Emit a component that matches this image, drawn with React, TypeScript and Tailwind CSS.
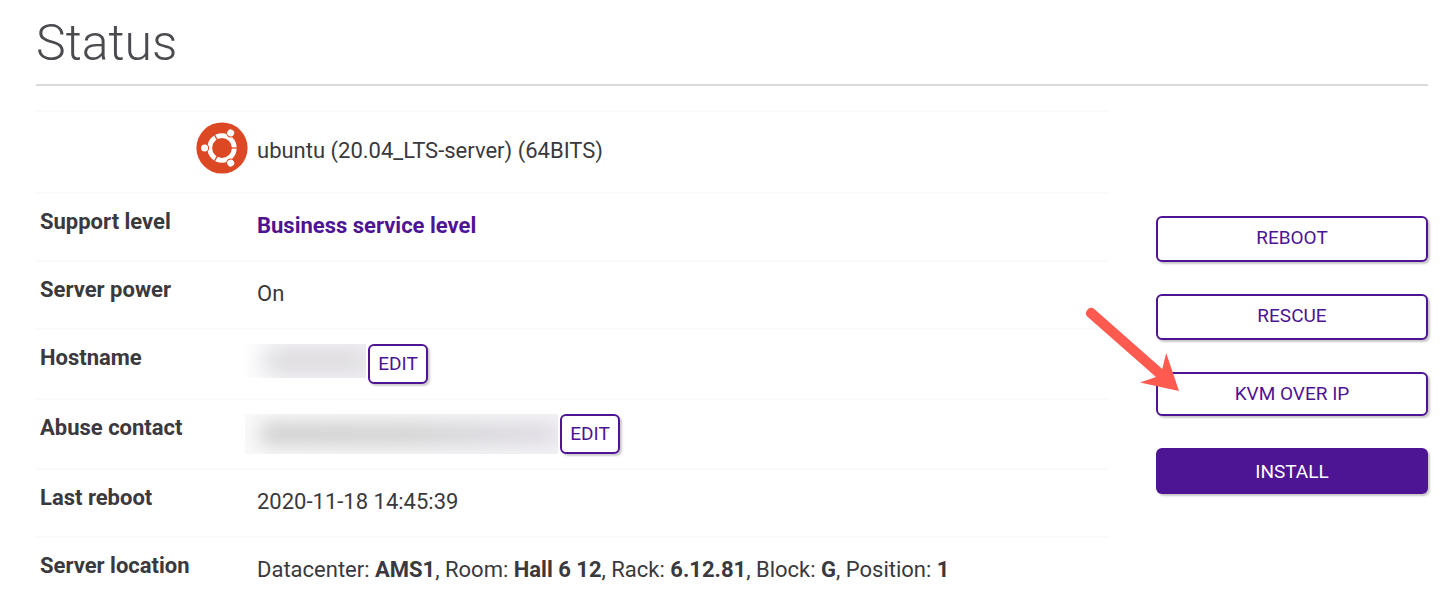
import type { ReactNode } from 'react';

function UbuntuLogo() {
  return (
    <svg viewBox="-26 -26 52 52" className="mr-px ml-auto block size-[52px]" role="img" aria-label="Ubuntu">
      <circle r="25.6" fill="#dd4824" />
      <circle r="12.3" fill="none" stroke="#fff" strokeWidth="4.8" />
      {[0, 120, 240].map((angle) => (
        <g key={angle} transform={`rotate(${angle})`}>
          <path d="M8 0H16" stroke="#dd4824" strokeWidth="1.3" />
          <circle cx="-17.4" r="4.6" fill="#dd4824" />
          <circle cx="-17.4" r="3.5" fill="#fff" />
        </g>
      ))}
    </svg>
  );
}

function Row({ label, children }: { label: string; children: ReactNode }) {
  return (
    <tr className="border-t-2 border-[#fafafa]">
      <th scope="row" className="w-[217px] px-1 pt-[14px] text-left align-top font-bold">
        {label}
      </th>
      <td className="px-1 pt-[18px] pb-5 align-top">{children}</td>
    </tr>
  );
}

function EditableRow({ label, children }: { label: string; children: ReactNode }) {
  return (
    <tr className="border-t-2 border-[#fafafa]">
      <th scope="row" className="w-[217px] px-1 pt-[14px] text-left align-top font-bold">
        {label}
      </th>
      <td className="px-1 py-[14px] align-top">
        <div className="-ml-3 flex items-start gap-[2px]">
          {children}
          <button
            type="button"
            aria-label={`Edit ${label.toLowerCase()}`}
            className="h-10 w-[60px] rounded-md border-2 border-[#4d1494] bg-white text-[19px] leading-6 text-[#4d1494] shadow-[2px_2px_2px_rgba(0,0,0,0.2)]"
          >
            EDIT
          </button>
        </div>
      </td>
    </tr>
  );
}

const outlineButton =
  'block w-full rounded-md border-2 border-[#4d1494] bg-white pt-2 text-[19px] leading-6 text-[#4d1494] shadow-[2px_2px_2px_rgba(0,0,0,0.22)]';

export default function App() {
  return (
    <main className="bg-white pr-[14px] pl-9 font-['Roboto',sans-serif] text-[22px] leading-7 text-[#3a393d]">
      <h1 className="border-b-2 border-[#dadada] pt-[13px] pb-[11px] text-[50px] leading-[60px] font-light text-[#4b4a4f]">
        Status
      </h1>
      <div className="flex items-start gap-12 pt-6">
        <table className="min-w-0 flex-1 border-collapse">
          <tbody>
            <tr className="border-t-2 border-[#fafafa]">
              <th scope="row" className="w-[217px] px-1 pt-[10px] pb-[18px] align-top">
                <UbuntuLogo />
              </th>
              <td className="px-1 pt-[25px] align-top">ubuntu (20.04_LTS-server) (64BITS)</td>
            </tr>
            <Row label="Support level">
              <a href="#support" className="font-bold text-[#4d1494]">
                Business service level
              </a>
            </Row>
            <Row label="Server power">On</Row>
            <EditableRow label="Hostname">
              <span className="-ml-1 flex h-[34px] w-[125px] items-center overflow-hidden bg-linear-to-r from-white to-[#f1eff4] to-40%">
                <span className="ml-6 h-4 flex-1 bg-[#d6d5d7] blur-[10px]" />
              </span>
            </EditableRow>
            <EditableRow label="Abuse contact">
              <span className="flex h-10 w-[313px] items-center overflow-hidden bg-linear-to-r from-[#fafafa] to-[#f4f3f6]">
                <span className="ml-4 h-5 flex-1 bg-linear-to-r from-[#c8c8c8] via-[#cccccc] to-[#dcd8e2] blur-[10px]" />
              </span>
            </EditableRow>
            <Row label="Last reboot">2020-11-18 14:45:39</Row>
            <Row label="Server location">
              Datacenter: <b>AMS1</b>, Room: <b>Hall 6 12</b>, Rack: <b>6.12.81</b>, Block: <b>G</b>, Position: <b>1</b>
            </Row>
          </tbody>
        </table>
        <aside className="flex w-[272px] shrink-0 flex-col gap-8 pt-[106px]">
          <button type="button" className={`${outlineButton} pb-[10px]`}>
            REBOOT
          </button>
          <button type="button" className={`${outlineButton} pb-[10px]`}>
            RESCUE
          </button>
          <div className="relative">
            <button type="button" className={`${outlineButton} pb-2`}>
              KVM OVER IP
            </button>
            <svg
              viewBox="0 0 97 88"
              className="pointer-events-none absolute -top-[66px] -left-[72px] h-[88px] w-[97px]"
              aria-hidden="true"
            >
              <path d="M10 2.8L78.3 63L82.2 47L95 85L56 76.5L72 71L3.5 10.8A5.2 5.2 0 0 1 10 2.8Z" fill="#ff5a50" />
            </svg>
          </div>
          <button
            type="button"
            className="block w-full rounded-md bg-[#4d1494] pt-3 pb-[10px] text-[19px] leading-6 text-white shadow-[2px_2px_2px_rgba(0,0,0,0.22)]"
          >
            INSTALL
          </button>
        </aside>
      </div>
    </main>
  );
}
